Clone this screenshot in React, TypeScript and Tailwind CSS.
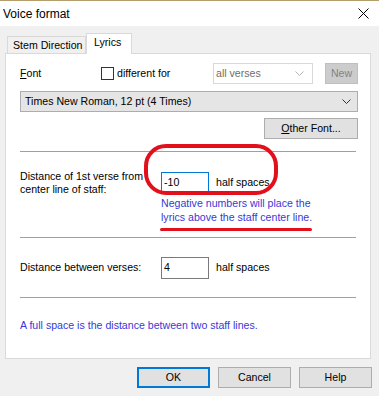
function Chevron({ color }: { color: string }) {
  return (
    <svg width="9" height="5" viewBox="0 0 9 5" fill="none">
      <path d="M0.5 0.5 L4.5 4.5 L8.5 0.5" stroke={color} strokeWidth="1" />
    </svg>
  );
}

function Button({ label, primary }: { label: React.ReactNode; primary?: boolean }) {
  return (
    <div
      className={
        primary
          ? "flex h-[21px] w-[73px] items-center justify-center border-2 border-[#0078d7] bg-[#e1e1e1]"
          : "flex h-[21px] w-[73px] items-center justify-center border border-[#adadad] bg-[#e1e1e1]"
      }
    >
      {label}
    </div>
  );
}

export default function App() {
  return (
    <div className="relative h-[396px] w-[379px] overflow-hidden whitespace-nowrap border-t border-[#b59d6e] bg-[#f0f0f0] font-['Liberation_Sans',Arial,sans-serif] text-[10.6px] text-black">
      {/* title bar */}
      <div className="flex h-[25px] items-center justify-between bg-white pl-[3px] pr-[10px]">
        <span className="text-[12px]">Voice format</span>
        <svg width="11" height="11" viewBox="0 0 11 11">
          <path d="M0.5 0.5 L10.5 10.5 M10.5 0.5 L0.5 10.5" stroke="#000" strokeWidth="1" />
        </svg>
      </div>

      {/* tabs */}
      <div className="relative z-10 -mb-px ml-[7px] mt-[7px] flex h-[21px] items-end">
        <div className="flex h-[18px] w-[79px] items-center border border-b-0 border-[#d9d9d9] pl-[5px]">
          Stem Direction
        </div>
        <div className="flex h-[21px] w-[46px] items-center border border-b-0 border-[#d9d9d9] bg-white pb-[2px] pl-[7px]">
          Lyrics
        </div>
      </div>

      {/* panel */}
      <div className="ml-[5px] flex h-[306px] w-[366px] flex-col border border-[#d9d9d9] bg-white pl-[14px] pr-[12px] pt-[9px]">
        <div className="flex h-[21px] items-center">
          <span className="w-[81px]">
            <span className="underline">F</span>ont
          </span>
          <div className="flex w-[112px] items-center gap-[3px]">
            <div className="h-[13px] w-[13px] border border-[#333] bg-white" />
            <span>different for</span>
          </div>
          <div className="flex h-[21px] w-[100px] items-center justify-between border border-[#d9d9d9] pl-[2px] pr-[8px] text-[#6d6d6d]">
            <span>all verses</span>
            <Chevron color="#b5b5b5" />
          </div>
          <div className="ml-[12px] flex h-[21px] w-[33px] items-center justify-center border border-[#bfbfbf] bg-[#cccccc] text-[#838383]">
            New
          </div>
        </div>

        <div className="mt-[7px] flex h-[21px] w-[338px] items-center justify-between border border-[#adadad] bg-[#e5e5e5] pl-[4px] pr-[6px]">
          <span>Times New Roman, 12 pt (4 Times)</span>
          <Chevron color="#333" />
        </div>

        <div className="mt-[6px] flex justify-end">
          <div className="flex h-[21px] w-[94px] items-center justify-center border border-[#adadad] bg-[#e1e1e1]">
            <span>
              <span className="underline">O</span>ther Font...
            </span>
          </div>
        </div>

        <div className="mt-[12px] h-px w-[336px] bg-[#a0a0a0]" />

        <div className="mt-[18px] flex">
          <div className="w-[141px] leading-[13px]">
            Distance of 1st verse from
            <br />
            center line of staff:
          </div>
          <div className="mt-[2px] flex flex-col">
            <div className="flex items-center">
              <div className="flex h-[22px] w-[48px] items-center border border-[#0078d7] pl-[2px]">-10</div>
              <span className="ml-[7px]">half spaces</span>
            </div>
            <div className="mt-[2px] leading-[14px] text-[#3838d8]">
              Negative numbers will place the
              <br />
              lyrics above the staff center line.
            </div>
          </div>
        </div>

        <div className="mt-[13px] h-px w-[336px] bg-[#a0a0a0]" />

        <div className="mt-[19px] flex items-center">
          <span className="w-[141px]">Distance between verses:</span>
          <div className="flex h-[22px] w-[48px] items-center border border-[#7a7a7a] pl-[2px]">4</div>
          <span className="ml-[7px]">half spaces</span>
        </div>

        <div className="mt-[18px] h-px w-[336px] bg-[#a0a0a0]" />

        <div className="mt-[20px] leading-[14px] text-[#3838d8]">
          A full space is the distance between two staff lines.
        </div>
      </div>

      {/* buttons */}
      <div className="mr-[7px] mt-[8px] flex justify-end gap-[8px]">
        <Button label="OK" primary />
        <Button label="Cancel" />
        <Button label="Help" />
      </div>

      {/* red annotations */}
      <div className="absolute left-[144px] top-[143px] h-[51px] w-[134px] rounded-[22px] border-[4px] border-[#e3101c]" />
      <div className="absolute left-[160px] top-[227px] h-[3px] w-[152px] rounded-full bg-[#e3101c]" />
    </div>
  );
}
